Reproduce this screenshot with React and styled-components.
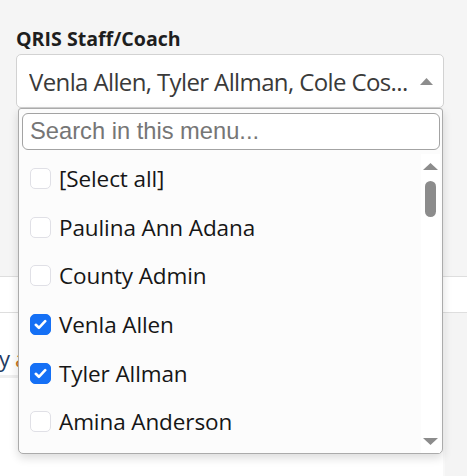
import React from "react";
import styled, { createGlobalStyle } from "styled-components";

const Global = createGlobalStyle`
  html, body { margin: 0; padding: 0; }
  body {
    background: #f5f5f5;
    font-family: "Open Sans", "Noto Sans", sans-serif;
    width: 467px;
    height: 476px;
    overflow: hidden;
  }
`;

const Page = styled.div`
  position: relative;
  width: 467px;
  height: 476px;
  display: flex;
  flex-direction: column;
`;

const Header = styled.div`
  height: 276px;
  padding: 26px 23px 0 16px;
  box-sizing: border-box;
  display: flex;
  flex-direction: column;
`;

const Label = styled.label`
  font-weight: 700;
  font-size: 19.6px;
  line-height: 26px;
  color: #1e1e1e;
  margin-bottom: 2px;
`;

const SelectBox = styled.div`
  height: 54px;
  box-sizing: border-box;
  border: 1px solid #d2d2d2;
  border-radius: 5px;
  background: #fff;
  display: flex;
  align-items: center;
  padding: 0 10px 0 12px;
  gap: 10px;
`;

const SelectText = styled.span`
  flex: 1;
  font-size: 24px;
  color: #3a3a3a;
  white-space: nowrap;
  overflow: hidden;
  letter-spacing: -0.62px;
`;

const Toolbar = styled.div`
  height: 37px;
  box-sizing: border-box;
  background: #fff;
  border-top: 1px solid #dedede;
  border-bottom: 1px solid #dedede;
`;

const Content = styled.div`
  flex: 1;
  display: flex;
`;

const Panel = styled.div`
  width: 443px;
  background: #fff;
  display: flex;
  flex-direction: column;
`;

const PanelRow = styled.div`
  height: 65px;
  box-sizing: border-box;
  border-bottom: 3px solid #efefef;
  display: flex;
  align-items: flex-end;
  padding-bottom: 2px;
  font-size: 22px;
  margin-left: -1px;
  white-space: pre;
`;

const Blue = styled.span`
  color: #1f3b63;
`;
const Orange = styled.span`
  color: #c8731c;
  margin-left: 5px;
`;

const Side = styled.div`
  flex: 1;
  background: #f4f4f4;
  border-left: 2px solid #f8f8f8;
`;

const Dropdown = styled.div`
  position: absolute;
  left: 18px;
  top: 108px;
  width: 425px;
  height: 346px;
  box-sizing: border-box;
  background: #fcfcfc;
  border: 1px solid #ababab;
  border-radius: 3px 3px 5px 5px;
  box-shadow: 0 4px 10px rgba(0, 0, 0, 0.14);
  display: flex;
  flex-direction: column;
  padding: 4px 2px 0 3px;
`;

const Search = styled.input`
  height: 37px;
  box-sizing: border-box;
  border: 1px solid #a3a3a3;
  border-radius: 6px;
  background: #fff;
  padding: 0 7px;
  font-family: "Liberation Sans", Arial, sans-serif;
  font-size: 23.7px;
  color: #333;
  outline: none;
  &::placeholder {
    color: #767676;
  }
`;

const ListArea = styled.div`
  flex: 1;
  display: flex;
  margin-top: 4px;
  min-height: 0;
`;

const Items = styled.div`
  flex: 1;
  overflow: hidden;
  display: flex;
  flex-direction: column;
`;

const Item = styled.div`
  height: 48.7px;
  flex: none;
  display: flex;
  align-items: center;
  gap: 8px;
  padding-left: 8px;
  font-size: 22.5px;
  color: #161616;
  letter-spacing: -0.1px;
`;

const Box = styled.span`
  width: 21px;
  height: 21px;
  box-sizing: border-box;
  border-radius: 5px;
  flex: none;
  display: flex;
  align-items: center;
  justify-content: center;
  background: ${(p) => (p.$checked ? "#1570f5" : "#fff")};
  border: 1px solid ${(p) => (p.$checked ? "#1570f5" : "#e0e0e6")};
`;

const Scrollbar = styled.div`
  width: 19px;
  background: #fff;
  display: flex;
  flex-direction: column;
  align-items: center;
  padding: 9px 0 8px;
  box-sizing: border-box;
`;

const Thumb = styled.div`
  width: 11px;
  height: 36px;
  border-radius: 6px;
  background: #8c8c8c;
  margin-top: 11px;
`;

const Spacer = styled.div`
  flex: 1;
`;

const Tri = ({ down, color = "#8c8c8c", w = 15, h = 7 }) => (
  <svg width={w} height={h} viewBox={`0 0 ${w} ${h}`} style={{ display: "block", flex: "none" }}>
    <polygon
      points={down ? `0,0 ${w},0 ${w / 2},${h}` : `0,${h} ${w},${h} ${w / 2},0`}
      fill={color}
    />
  </svg>
);

const Check = () => (
  <svg width="13" height="11" viewBox="0 0 13 11">
    <path d="M1.8 5.8 L4.9 8.8 L11.2 2.2" fill="none" stroke="#fff" strokeWidth="2.6" strokeLinecap="round" strokeLinejoin="round" />
  </svg>
);

const options = [
  { label: "[Select all]", checked: false },
  { label: "Paulina Ann Adana", checked: false },
  { label: "County Admin", checked: false },
  { label: "Venla Allen", checked: true },
  { label: "Tyler Allman", checked: true },
  { label: "Amina Anderson", checked: false },
];

export default function App() {
  return (
    <>
      <Global />
      <Page>
        <Header>
          <Label>QRIS Staff/Coach</Label>
          <SelectBox>
            <SelectText>Venla Allen, Tyler Allman, Cole Cos...</SelectText>
            <Tri w={13} h={7} color="#8d8d8d" />
          </SelectBox>
        </Header>
        <Toolbar />
        <Content>
          <Panel>
            <PanelRow>
              <Blue>y</Blue>
              <Orange>a</Orange>
            </PanelRow>
          </Panel>
          <Side />
        </Content>
        <Dropdown>
          <Search placeholder="Search in this menu..." />
          <ListArea>
            <Items>
              {options.map((o) => (
                <Item key={o.label}>
                  <Box $checked={o.checked}>{o.checked && <Check />}</Box>
                  {o.label}
                </Item>
              ))}
            </Items>
            <Scrollbar>
              <Tri />
              <Thumb />
              <Spacer />
              <Tri down />
            </Scrollbar>
          </ListArea>
        </Dropdown>
      </Page>
    </>
  );
}
